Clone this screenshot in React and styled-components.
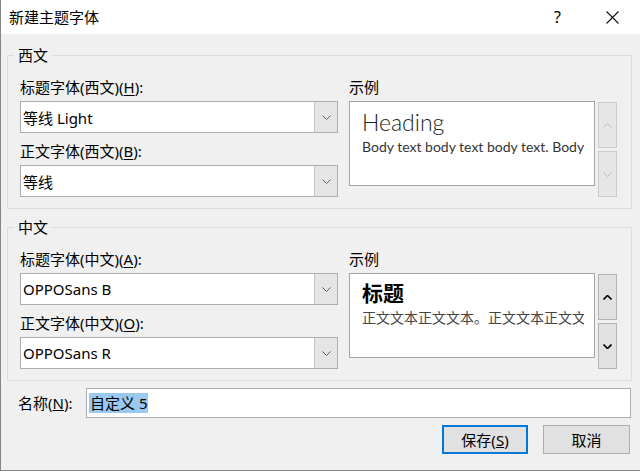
import React from 'react'
import styled, { createGlobalStyle } from 'styled-components'

const GlobalStyle = createGlobalStyle`
  html, body {
    margin: 0;
    padding: 0;
    background: #ffffff;
  }
  body {
    font-family: "Noto Sans", "Noto Sans CJK SC", sans-serif;
  }
  * {
    box-sizing: border-box;
  }
`

const Window = styled.div`
  width: 640px;
  height: 471px;
  display: flex;
  flex-direction: column;
  background: #f0f0f0;
  border-left: 1px solid #858585;
  border-bottom: 1px solid #858585;
  overflow: hidden;
  color: #000;
  font-size: 15px;
`

const TitleBar = styled.div`
  height: 34px;
  flex: none;
  display: flex;
  align-items: center;
  background: #ffffff;
  padding-left: 8px;
`

const Title = styled.div`
  flex: 1;
  font-size: 15px;
  line-height: 20px;
`

const TitleButton = styled.div`
  width: 55px;
  height: 34px;
  display: flex;
  align-items: center;
  justify-content: center;
  font-size: 16px;
`

const Body = styled.div`
  flex: 1;
  display: flex;
  flex-direction: column;
  padding: 11px 8px 0 6px;
`

const Groups = styled.div`
  display: flex;
  flex-direction: column;
  gap: 8px;
`

const Group = styled.fieldset`
  margin: 0;
  min-width: 0;
  padding: 12px 13px 11px 12px;
  border: 1px solid #dcdcdc;
`

const Legend = styled.legend`
  padding: 0 4px;
  margin-left: -6px;
  line-height: 20px;
  font-size: 15px;
`

const GroupGrid = styled.div`
  display: grid;
  grid-template-columns: 318px 1fr;
  column-gap: 11px;
`

const Column = styled.div`
  display: flex;
  flex-direction: column;
`

const FieldLabel = styled.div`
  line-height: 20px;
  margin-bottom: 4px;
  margin-top: ${p => (p.$spaced ? '8px' : '0')};
  white-space: nowrap;

  u {
    text-underline-offset: 2px;
  }
`

const Combo = styled.div`
  height: 32px;
  display: flex;
  background: #ffffff;
  border: 1px solid #adadad;
`

const ComboText = styled.div`
  flex: 1;
  display: flex;
  align-items: center;
  padding-left: 2px;
  font-size: 15px;
  white-space: nowrap;
`

const ComboButton = styled.div`
  width: 23px;
  display: flex;
  align-items: center;
  justify-content: center;
  background: #e5e5e5;
  border-left: 1px solid #c4c4c4;
`

const PreviewRow = styled.div`
  display: flex;
  align-items: flex-start;
  gap: 3px;
`

const PreviewBox = styled.div`
  width: 246px;
  height: 85px;
  background: #ffffff;
  border: 1px solid #a5a5a5;
  padding: ${p => (p.$cjk ? '4px' : '6px')} 10px 0 12px;
  overflow: hidden;
`

const PreviewHeading = styled.div`
  font-family: ${p => (p.$cjk ? '"Noto Sans CJK SC", sans-serif' : 'Lato, "Noto Sans", sans-serif')};
  font-weight: ${p => (p.$cjk ? 700 : 300)};
  font-size: ${p => (p.$cjk ? '21px' : '23px')};
  line-height: 28px;
  color: ${p => (p.$cjk ? '#000' : '#222')};
  white-space: nowrap;
`

const PreviewBody = styled.div`
  font-family: ${p => (p.$cjk ? '"Noto Sans CJK SC", sans-serif' : 'Lato, "Noto Sans", sans-serif')};
  font-size: 14px;
  line-height: 18px;
  margin-top: ${p => (p.$cjk ? '2px' : '2px')};
  color: ${p => (p.$cjk ? '#444' : '#333')};
  white-space: nowrap;
  overflow: hidden;
`

const SpinColumn = styled.div`
  display: flex;
  flex-direction: column;
  gap: 3px;
  margin-top: 1px;
`

const SpinButton = styled.div`
  width: 19px;
  height: 46px;
  display: flex;
  align-items: center;
  justify-content: center;
  background: ${p => (p.$disabled ? '#e6e6e6' : '#e1e1e1')};
  border: 1px solid ${p => (p.$disabled ? '#cbcbcb' : '#b4b4b4')};
`

const NameRow = styled.div`
  margin-top: 7px;
  display: flex;
  align-items: center;
  padding-left: 11px;
  padding-right: 1px;
`

const NameLabel = styled.div`
  width: 68px;
  line-height: 20px;
  white-space: nowrap;
`

const NameInput = styled.div`
  flex: 1;
  height: 30px;
  display: flex;
  align-items: center;
  padding-left: 2px;
  background: #ffffff;
  border: 1px solid #adadad;
`

const Selection = styled.span`
  background: #99c9ef;
  line-height: 20px;
  padding: 0 1px;
  white-space: pre;
`

const ButtonRow = styled.div`
  margin-top: 7px;
  display: flex;
  justify-content: flex-end;
  gap: 15px;
  padding-right: 2px;
`

const Button = styled.div`
  width: ${p => p.$width}px;
  height: 29px;
  display: flex;
  align-items: center;
  justify-content: center;
  background: #e1e1e1;
  border: ${p => (p.$default ? '2px solid #0078d7' : '1px solid #adadad')};
  font-size: 15px;
`

const Chevron = ({ up, color = '#606060', width = 1 }) => (
  <svg width="9" height="5" viewBox="0 0 9 5">
    <polyline
      points={up ? '0.5,4.5 4.5,0.5 8.5,4.5' : '0.5,0.5 4.5,4.5 8.5,0.5'}
      fill="none"
      stroke={color}
      strokeWidth={width}
    />
  </svg>
)

const CloseIcon = () => (
  <svg width="13" height="13" viewBox="0 0 13 13">
    <path d="M0.5 0.5 L12.5 12.5 M12.5 0.5 L0.5 12.5" stroke="#111" strokeWidth="1.1" />
  </svg>
)

const Accel = ({ children }) => <u>{children}</u>

const FontGroup = ({ legend, headLabel, headKey, bodyLabel, bodyKey, headFont, bodyFont, cjk }) => (
  <Group>
    <Legend>{legend}</Legend>
    <GroupGrid>
      <Column>
        <FieldLabel>
          {headLabel}(<Accel>{headKey}</Accel>):
        </FieldLabel>
        <Combo>
          <ComboText>{headFont}</ComboText>
          <ComboButton>
            <Chevron />
          </ComboButton>
        </Combo>
        <FieldLabel $spaced>
          {bodyLabel}(<Accel>{bodyKey}</Accel>):
        </FieldLabel>
        <Combo>
          <ComboText>{bodyFont}</ComboText>
          <ComboButton>
            <Chevron />
          </ComboButton>
        </Combo>
      </Column>
      <Column>
        <FieldLabel>示例</FieldLabel>
        <PreviewRow>
          {cjk ? (
            <PreviewBox $cjk>
              <PreviewHeading $cjk>标题</PreviewHeading>
              <PreviewBody $cjk>正文文本正文文本。正文文本正文文本。</PreviewBody>
            </PreviewBox>
          ) : (
            <PreviewBox>
              <PreviewHeading>Heading</PreviewHeading>
              <PreviewBody>Body text body text body text. Body text.</PreviewBody>
            </PreviewBox>
          )}
          <SpinColumn>
            <SpinButton $disabled={!cjk}>
              {cjk ? <Chevron up color="#000" width={1.6} /> : <Chevron up color="#b8b8b8" />}
            </SpinButton>
            <SpinButton $disabled={!cjk}>
              {cjk ? <Chevron color="#000" width={1.6} /> : <Chevron color="#b8b8b8" />}
            </SpinButton>
          </SpinColumn>
        </PreviewRow>
      </Column>
    </GroupGrid>
  </Group>
)

export default function App() {
  return (
    <>
      <GlobalStyle />
      <Window>
        <TitleBar>
          <Title>新建主题字体</Title>
          <TitleButton>?</TitleButton>
          <TitleButton>
            <CloseIcon />
          </TitleButton>
        </TitleBar>
        <Body>
          <Groups>
            <FontGroup
              legend="西文"
              headLabel="标题字体(西文)"
              headKey="H"
              bodyLabel="正文字体(西文)"
              bodyKey="B"
              headFont="等线 Light"
              bodyFont="等线"
            />
            <FontGroup
              cjk
              legend="中文"
              headLabel="标题字体(中文)"
              headKey="A"
              bodyLabel="正文字体(中文)"
              bodyKey="O"
              headFont="OPPOSans B"
              bodyFont="OPPOSans R"
            />
          </Groups>
          <NameRow>
            <NameLabel>
              名称(<Accel>N</Accel>):
            </NameLabel>
            <NameInput>
              <Selection>自定义 5</Selection>
            </NameInput>
          </NameRow>
          <ButtonRow>
            <Button $width={86} $default>
              保存(<Accel>S</Accel>)
            </Button>
            <Button $width={87}>取消</Button>
          </ButtonRow>
        </Body>
      </Window>
    </>
  )
}
